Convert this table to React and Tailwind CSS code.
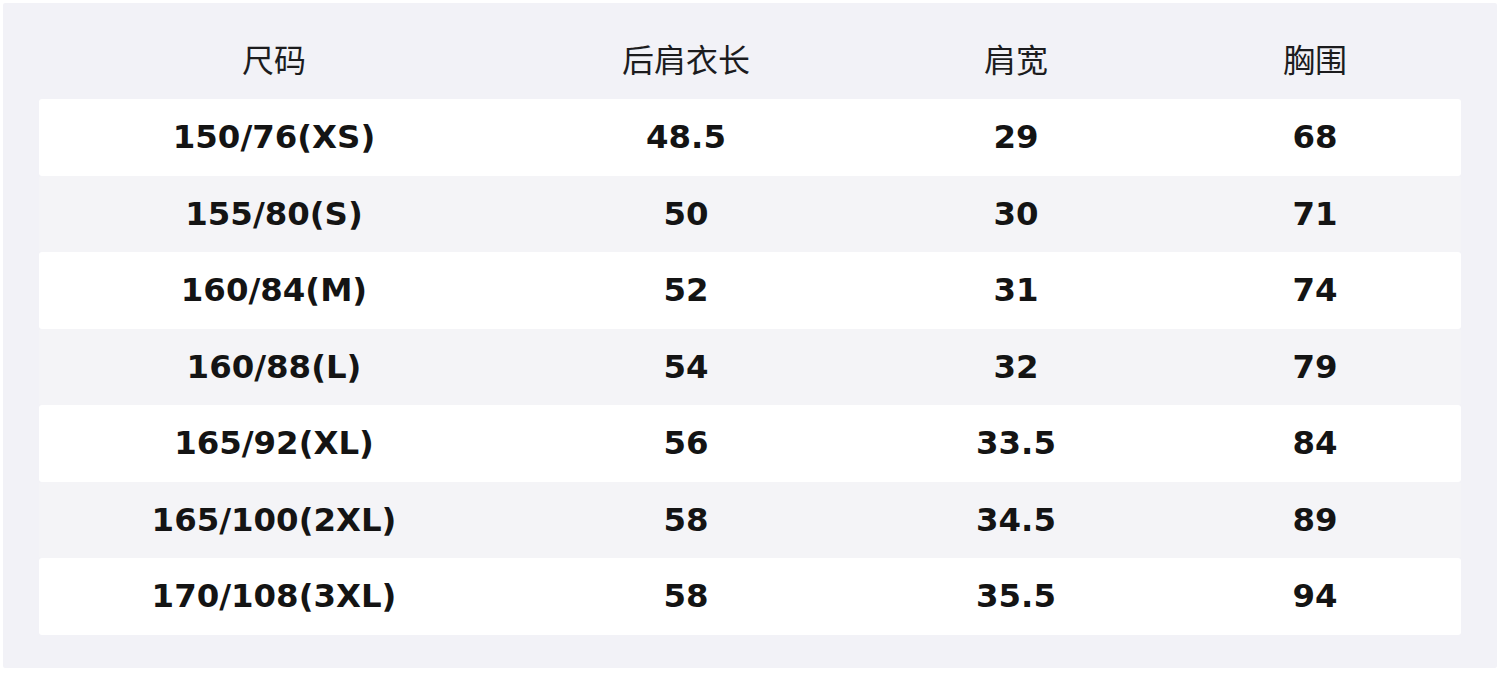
import React from "react";

const headers = ["尺码", "后肩衣长", "肩宽", "胸围"];
const rows = [
  ["150/76(XS)", "48.5", "29", "68"],
  ["155/80(S)", "50", "30", "71"],
  ["160/84(M)", "52", "31", "74"],
  ["160/88(L)", "54", "32", "79"],
  ["165/92(XL)", "56", "33.5", "84"],
  ["165/100(2XL)", "58", "34.5", "89"],
  ["170/108(3XL)", "58", "35.5", "94"],
];

export default function App() {
  return (
    <div
      className="w-[1500px] h-[674px] bg-white pt-[3px] pl-[3px] pr-[3px] pb-[6px]"
      style={{ fontFamily: '"DejaVu Sans", "Noto Sans CJK SC", sans-serif' }}
    >
      <div className="w-full h-full bg-[#f2f2f7] rounded-[2px] pt-[19px] px-[36px]">
        <div className="grid grid-cols-[470px_354px_306px_292px] h-[77px] items-center text-[32px] text-[#1c1c1e] font-normal">
          {headers.map((h) => (
            <div key={h} className="text-center leading-none">{h}</div>
          ))}
        </div>
        {rows.map((r, i) => (
          <div
            key={i}
            className={
              "grid grid-cols-[470px_354px_306px_292px] h-[76.5px] items-center rounded-[3px] text-[32.4px] font-bold text-[#141414] " +
              (i % 2 === 0 ? "bg-white" : "bg-[#f4f4f7]")
            }
          >
            {r.map((c, j) => (
              <div key={j} className="text-center leading-none">{c}</div>
            ))}
          </div>
        ))}
      </div>
    </div>
  );
}
